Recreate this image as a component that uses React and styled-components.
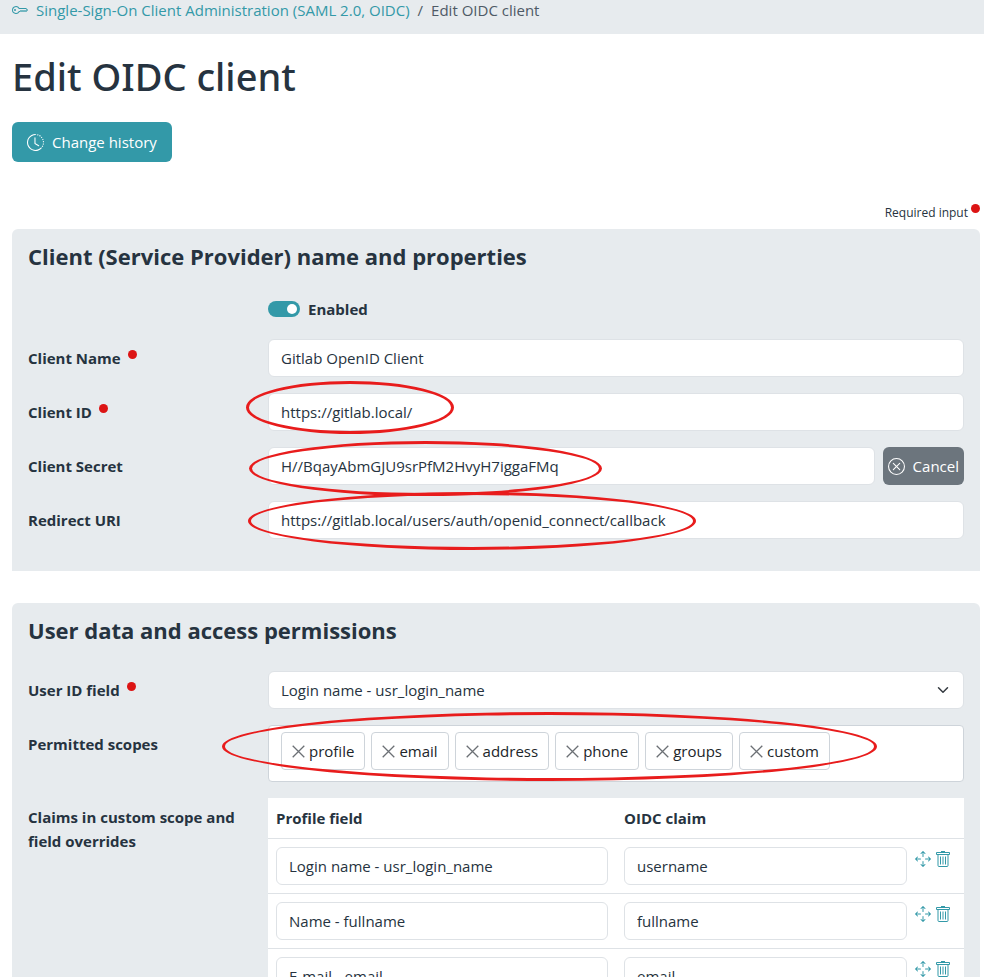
import React from 'react';
import styled, { createGlobalStyle } from 'styled-components';
import { BsArrowsMove, BsClockHistory, BsKey, BsXCircle } from 'react-icons/bs';

const GlobalStyle = createGlobalStyle`
  *, *::before, *::after {
    box-sizing: border-box;
  }
  body {
    margin: 0;
    background: #fff;
    color: #263340;
    font-family: 'Open Sans', 'Noto Sans', sans-serif;
    font-size: 15px;
    line-height: 24px;
  }
  input, select, button {
    font: inherit;
    color: inherit;
  }
`;

const Breadcrumb = styled.nav`
  display: flex;
  align-items: center;
  gap: 8px;
  padding: 0 12px 14px;
  background: #e7ebee;
  line-height: 20px;
`;
const BreadcrumbLink = styled.a`
  display: flex;
  align-items: center;
  gap: 8px;
  color: #3399a8;
  text-decoration: none;
`;
const Current = styled.span`
  color: #4e5a66;
`;
const Content = styled.main`
  padding: 18px 4px 0 12px;
`;
const Title = styled.h1`
  margin: 0 0 22px;
  font-family: 'Noto Sans', 'Open Sans', sans-serif;
  font-size: 38px;
  font-weight: 500;
  line-height: 48px;
`;
const Button = styled.button`
  display: inline-flex;
  align-items: center;
  gap: 8px;
  height: ${(props) => (props.$compact ? 38 : 40)}px;
  padding: 0 ${(props) => (props.$compact ? 5 : 15)}px;
  border: none;
  border-radius: 6px;
  background: ${(props) => (props.$compact ? '#6c757d' : '#3399a8')};
  color: #fff;
  cursor: pointer;
`;
const RequiredNote = styled.p`
  display: flex;
  justify-content: flex-end;
  gap: 3px;
  margin: 40px 0 5px;
  font-size: 12px;
  line-height: 22px;
`;
const Dot = styled.span`
  flex: none;
  width: 9px;
  height: 9px;
  margin-top: 2px;
  border-radius: 50%;
  background: #dc1414;
`;
const Panel = styled.section`
  margin-bottom: 32px;
  padding: 11px 16px 32px;
  border-radius: 6px 6px 0 0;
  background: #e7ebee;
`;
const PanelTitle = styled.h2`
  margin: 0 0 25px;
  font-size: 22px;
  font-weight: 700;
  line-height: 32px;
`;
const Row = styled.div`
  display: grid;
  grid-template-columns: 240px 1fr;
  margin-bottom: 16px;

  &:last-child {
    margin-bottom: 0;
  }
`;
const Label = styled.label`
  display: flex;
  align-items: flex-start;
  gap: 7px;
  padding: 7px 24px 7px 0;
  font-weight: 700;

  ${Dot} {
    margin-top: 4px;
  }
`;
const Field = styled.div`
  position: relative;
  display: flex;
  gap: 8px;
  min-width: 0;
`;
const Input = styled.input`
  flex: 1;
  width: 100%;
  min-width: 0;
  height: 38px;
  padding: 0 12px;
  border: 1px solid #dee2e6;
  border-radius: 6px;
  background: #fff;
`;
const Select = styled.select`
  flex: 1;
  height: 38px;
  padding: 0 12px;
  border: 1px solid #dee2e6;
  border-radius: 6px;
  background: #fff;
  appearance: none;
`;
const Chevron = styled.svg`
  position: absolute;
  top: 13px;
  right: 15px;
  pointer-events: none;
`;
const SwitchRow = styled.label`
  display: flex;
  grid-column: 2;
  align-items: center;
  gap: 8px;
  margin-bottom: 2px;
  font-weight: 700;
`;
const Switch = styled.input`
  display: flex;
  align-items: center;
  justify-content: flex-end;
  width: 32px;
  height: 16px;
  margin: 0;
  padding: 0 3px;
  border-radius: 8px;
  background: #3399a8;
  appearance: none;

  &::before {
    content: '';
    width: 10px;
    height: 10px;
    border-radius: 50%;
    background: #fff;
  }
  &:not(:checked) {
    justify-content: flex-start;
    background: #adb5bd;
  }
`;
const Scopes = styled.ul`
  display: flex;
  flex: 1;
  flex-wrap: wrap;
  gap: 6px;
  margin: 0;
  padding: 6px 12px 11px;
  border: 1px solid #ced4da;
  border-radius: 4px;
  background: #fff;
  list-style: none;
`;
const Scope = styled.li`
  display: flex;
  align-items: center;
  gap: 4px;
  height: 38px;
  padding: 0 10px;
  border: 1px solid #ced4da;
  border-radius: 4px;
  color: #212529;
`;
const RemoveButton = styled.button`
  display: flex;
  padding: 0;
  border: none;
  background: none;
  color: #6c7075;
  cursor: pointer;
`;
const Claims = styled.table`
  width: 100%;
  border-collapse: collapse;
  table-layout: fixed;
  background: #fff;
`;
const HeadCell = styled.th`
  width: ${(props) => props.$width || 'auto'};
  height: 40px;
  padding: 0 8px;
  border-bottom: 1px solid #dee2e6;
  text-align: left;
`;
const Cell = styled.td`
  height: 55px;
  padding: ${(props) => (props.$actions ? '12px 0 0' : '8px')};
  border-bottom: 1px solid #dee2e6;
  vertical-align: top;
  line-height: 0;
`;
const IconButton = styled.button`
  margin-right: 4px;
  padding: 0;
  border: none;
  background: none;
  color: #3399a8;
  line-height: 0;
  cursor: pointer;
`;
// hand-drawn style highlight lying over a field
const Highlight = styled.span`
  position: absolute;
  top: ${(props) => props.$top}px;
  left: ${(props) => props.$left}px;
  z-index: 1;
  width: ${(props) => props.$width}px;
  height: ${(props) => props.$height}px;
  border: 3px solid #e81c1c;
  border-radius: 50%;
  pointer-events: none;
`;

const scopes = ['profile', 'email', 'address', 'phone', 'groups', 'custom'];
const claims = [
  ['Login name - usr_login_name', 'username'],
  ['Name - fullname', 'fullname'],
  ['E-mail - email', 'email'],
];

const TrashIcon = () => (
  <svg width="16" height="16" viewBox="0 0 16 16" fill="none" stroke="currentColor">
    <path d="M6 .5h4M1.5 1.5h13v2h-13zM3 3.5v11q0 1 1 1h8q1 0 1-1v-11" />
    <path d="M5.5 5.5v8M8 5.5v8M10.5 5.5v8" />
  </svg>
);

const TextRow = ({ id, label, value, required, highlight, children }) => (
  <Row>
    <Label htmlFor={id}>
      {label}
      {required && <Dot />}
    </Label>
    <Field>
      <Input id={id} type="text" defaultValue={value} spellCheck={false} required={required} />
      {children}
      {highlight && <Highlight {...highlight} />}
    </Field>
  </Row>
);

const ClaimRow = ({ field, claim }) => (
  <tr>
    <Cell>
      <Input aria-label="Profile field" defaultValue={field} spellCheck={false} />
    </Cell>
    <Cell>
      <Input aria-label="OIDC claim" defaultValue={claim} spellCheck={false} />
    </Cell>
    <Cell $actions>
      <IconButton type="button" aria-label="Move">
        <BsArrowsMove size={16} />
      </IconButton>
      <IconButton type="button" aria-label="Delete">
        <TrashIcon />
      </IconButton>
    </Cell>
  </tr>
);

const App = () => (
  <>
    <GlobalStyle />
    <Breadcrumb>
      <BreadcrumbLink href="#clients">
        <BsKey size={16} />
        Single-Sign-On Client Administration (SAML 2.0, OIDC)
      </BreadcrumbLink>
      <Current>/</Current>
      <Current>Edit OIDC client</Current>
    </Breadcrumb>
    <Content>
      <Title>Edit OIDC client</Title>
      <Button type="button">
        <BsClockHistory size={17} />
        Change history
      </Button>
      <RequiredNote>
        Required input
        <Dot />
      </RequiredNote>

      <Panel>
        <PanelTitle>Client (Service Provider) name and properties</PanelTitle>
        <Row>
          <SwitchRow>
            <Switch type="checkbox" role="switch" defaultChecked />
            Enabled
          </SwitchRow>
        </Row>
        <TextRow id="client-name" label="Client Name" value="Gitlab OpenID Client" required />
        <TextRow
          id="client-id"
          label="Client ID"
          value="https://gitlab.local/"
          required
          highlight={{ $top: -12, $left: -22, $width: 208, $height: 53 }}
        />
        <TextRow
          id="client-secret"
          label="Client Secret"
          value="H//BqayAbmGJU9srPfM2HvyH7iggaFMq"
          highlight={{ $top: -6, $left: -19, $width: 353, $height: 55 }}
        >
          <Button type="button" $compact>
            <BsXCircle size={17} />
            Cancel
          </Button>
        </TextRow>
        <TextRow
          id="redirect-uri"
          label="Redirect URI"
          value="https://gitlab.local/users/auth/openid_connect/callback"
          highlight={{ $top: -9, $left: -20, $width: 448, $height: 58 }}
        />
      </Panel>

      <Panel>
        <PanelTitle>User data and access permissions</PanelTitle>
        <Row>
          <Label htmlFor="user-id-field">
            User ID field
            <Dot />
          </Label>
          <Field>
            <Select id="user-id-field" required>
              <option>Login name - usr_login_name</option>
            </Select>
            <Chevron width="12" height="12" viewBox="0 0 16 16" fill="none" stroke="#343a40" strokeWidth="2">
              <path d="m2 5 6 6 6-6" strokeLinecap="round" strokeLinejoin="round" />
            </Chevron>
          </Field>
        </Row>
        <Row>
          <Label as="span">Permitted scopes</Label>
          <Field>
            <Scopes>
              {scopes.map((scope) => (
                <Scope key={scope}>
                  <RemoveButton type="button" aria-label={`Remove ${scope}`}>
                    <svg width="13" height="13" viewBox="0 0 13 13" stroke="currentColor" strokeWidth="1.3">
                      <path d="M.7.7l11.6 11.6M12.3.7.7 12.3" />
                    </svg>
                  </RemoveButton>
                  {scope}
                </Scope>
              ))}
            </Scopes>
            <Highlight $top={-13} $left={-46} $width={655} $height={69} />
          </Field>
        </Row>
        <Row>
          <Label as="span">Claims in custom scope and field overrides</Label>
          <Claims>
            <thead>
              <tr>
                <HeadCell $width="50%">Profile field</HeadCell>
                <HeadCell>OIDC claim</HeadCell>
                <HeadCell as="td" $width="49px" />
              </tr>
            </thead>
            <tbody>
              {claims.map(([field, claim]) => (
                <ClaimRow key={claim} field={field} claim={claim} />
              ))}
            </tbody>
          </Claims>
        </Row>
      </Panel>
    </Content>
  </>
);

export default App;
